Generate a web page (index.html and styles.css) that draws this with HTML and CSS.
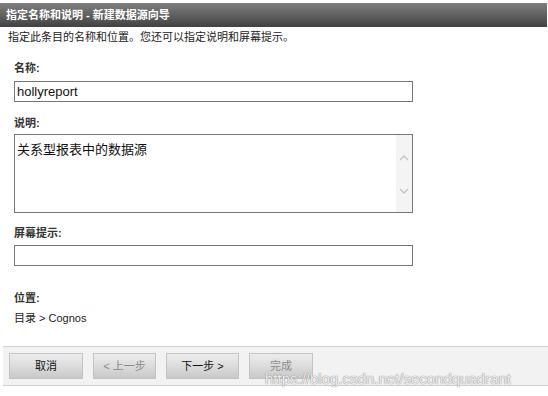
FILE: index.html
```html
<!DOCTYPE html>
<html lang="zh-CN">
<head>
<meta charset="utf-8">
<title>新建数据源向导</title>
<link rel="stylesheet" href="styles.css">
</head>
<body>
<div class="page">
  <div class="titlebar">指定名称和说明 - 新建数据源向导</div>
  <div class="intro">指定此条目的名称和位置。您还可以指定说明和屏幕提示。</div>
  <div class="form">
    <div class="label label-name">名称:</div>
    <div class="field">hollyreport</div>
    <div class="label label-desc">说明:</div>
    <div class="textarea">
      <div class="ta-text">关系型报表中的数据源</div>
      <div class="scrollbar">
        <svg width="10" height="7" viewBox="0 0 10 7"><path d="M1 6 L5 2 L9 6" fill="none" stroke="#c4c4c4" stroke-width="1.4"/></svg>
        <svg width="10" height="7" viewBox="0 0 10 7"><path d="M1 1 L5 5 L9 1" fill="none" stroke="#c4c4c4" stroke-width="1.4"/></svg>
      </div>
    </div>
    <div class="label label-tip">屏幕提示:</div>
    <div class="field"></div>
    <div class="label label-loc">位置:</div>
    <div class="path">目录 &gt; Cognos</div>
  </div>
  <div class="footer">
    <div class="btn btn-cancel">取消</div>
    <div class="btn btn-prev disabled">&lt; 上一步</div>
    <div class="btn btn-next">下一步 &gt;</div>
    <div class="btn btn-finish disabled">完成</div>
  </div>
  <div class="watermark">https://blog.csdn.net/secondquadrant</div>
</div>
</body>
</html>
```
FILE: styles.css
```css
html, body {
  margin: 0;
  padding: 0;
  background: #fff;
}
body {
  font-family: "Liberation Sans", "Noto Sans CJK SC", sans-serif;
  font-size: 11px;
  color: #222;
  width: 548px;
  height: 396px;
  overflow: hidden;
}
.page {
  position: relative;
  padding-top: 3px;
}
.titlebar {
  height: 24px;
  line-height: 24px;
  padding-left: 6px;
  font-weight: bold;
  color: #fff;
  background: linear-gradient(to bottom, #7e7e7e 0%, #616161 50%, #414141 100%);
  margin-right: 1px;
}
.intro {
  margin-top: 3px;
  padding-left: 8px;
  line-height: 14px;
  height: 14px;
  color: #222;
}
.form {
  padding-left: 14px;
  display: flex;
  flex-direction: column;
  align-items: flex-start;
}
.label {
  font-weight: bold;
  color: #333;
  line-height: 14px;
  height: 14px;
}
.label-name {
  margin-top: 17px;
  margin-bottom: 6px;
}
.label-desc {
  margin-top: 14px;
  margin-bottom: 4px;
}
.label-tip {
  margin-top: 13px;
  margin-bottom: 5px;
}
.label-loc {
  margin-top: 25px;
  margin-bottom: 6px;
}
.field {
  box-sizing: border-box;
  width: 399px;
  height: 21px;
  border: 1px solid #767676;
  font-size: 13px;
  line-height: 19px;
  padding-left: 2px;
  color: #111;
}
.textarea {
  box-sizing: border-box;
  width: 399px;
  height: 79px;
  border: 1px solid #767676;
  display: flex;
}
.ta-text {
  flex: 1;
  font-size: 13px;
  line-height: 17px;
  padding: 6px 0 0 2px;
  color: #111;
}
.scrollbar {
  width: 16px;
  background: #f4f4f4;
  display: flex;
  flex-direction: column;
  align-items: center;
  padding-top: 19px;
  gap: 27px;
}
.path {
  line-height: 14px;
  height: 14px;
  color: #222;
}
.footer {
  margin-top: 21px;
  margin-left: 3px;
  box-sizing: border-box;
  height: 40px;
  border-top: 1px solid #cfcfcf;
  border-bottom: 1px solid #cfcfcf;
  background: #f2f2f2;
  display: flex;
  gap: 10px;
  padding: 6px 0 0 6px;
}
.btn {
  box-sizing: border-box;
  height: 26px;
  border: 1px solid #c3c3c3;
  background: linear-gradient(to bottom, #ececec 0%, #dcdcdc 50%, #c9c9c9 100%);
  display: flex;
  align-items: center;
  justify-content: center;
  color: #111;
  font-size: 11px;
  line-height: 12px;
}
.btn-cancel { width: 74px; }
.btn-prev { width: 63px; }
.btn-next { width: 73px; }
.btn-finish { width: 64px; }
.btn.disabled {
  color: #8a8a8a;
}
.watermark {
  position: absolute;
  left: 265px;
  top: 372px;
  font-family: "Liberation Sans", sans-serif;
  font-size: 15px;
  line-height: 14px;
  color: rgba(255, 255, 255, 0.85);
  text-shadow: 0 0 1px #8c8c8c, 0 0 1px #8c8c8c;
  white-space: nowrap;
}
```
